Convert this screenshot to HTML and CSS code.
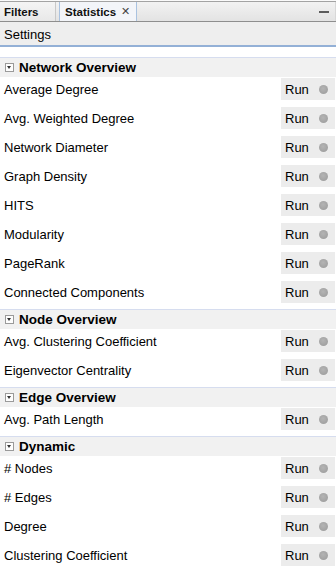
FILE: index.html
```html
<!DOCTYPE html>
<html>
<head>
<meta charset="utf-8">
<link rel="stylesheet" href="styles.css">
</head>
<body>
<div class="tabbar">
  <div class="tabs">
    <div class="tab tab-filters">Filters</div>
    <div class="tab tab-active">Statistics <span class="close">✕</span></div>
    <div class="tabfill"><span class="minimize"></span></div>
  </div>
</div>
<div class="settings">Settings</div>
<div class="spacer"></div>

<div class="sec"><span class="toggle"></span>Network Overview</div>
<div class="row"><span class="label">Average Degree</span><span class="run">Run<span class="dot"></span></span></div>
<div class="row"><span class="label">Avg. Weighted Degree</span><span class="run">Run<span class="dot"></span></span></div>
<div class="row"><span class="label">Network Diameter</span><span class="run">Run<span class="dot"></span></span></div>
<div class="row"><span class="label">Graph Density</span><span class="run">Run<span class="dot"></span></span></div>
<div class="row"><span class="label">HITS</span><span class="run">Run<span class="dot"></span></span></div>
<div class="row"><span class="label">Modularity</span><span class="run">Run<span class="dot"></span></span></div>
<div class="row"><span class="label">PageRank</span><span class="run">Run<span class="dot"></span></span></div>
<div class="row"><span class="label">Connected Components</span><span class="run">Run<span class="dot"></span></span></div>

<div class="sec"><span class="toggle"></span>Node Overview</div>
<div class="row"><span class="label">Avg. Clustering Coefficient</span><span class="run">Run<span class="dot"></span></span></div>
<div class="row"><span class="label">Eigenvector Centrality</span><span class="run">Run<span class="dot"></span></span></div>

<div class="sec"><span class="toggle"></span>Edge Overview</div>
<div class="row"><span class="label">Avg. Path Length</span><span class="run">Run<span class="dot"></span></span></div>

<div class="sec"><span class="toggle"></span>Dynamic</div>
<div class="row"><span class="label"># Nodes</span><span class="run">Run<span class="dot"></span></span></div>
<div class="row"><span class="label"># Edges</span><span class="run">Run<span class="dot"></span></span></div>
<div class="row"><span class="label">Degree</span><span class="run">Run<span class="dot"></span></span></div>
<div class="row"><span class="label">Clustering Coefficient</span><span class="run">Run<span class="dot"></span></span></div>
</body>
</html>
```
FILE: styles.css
```css
html, body {
  margin: 0;
  padding: 0;
  background: #ffffff;
}
body {
  width: 336px;
  height: 571px;
  overflow: hidden;
  font-family: "Liberation Sans", Arial, sans-serif;
  font-size: 13px;
  color: #000;
}
.tabbar {
  padding-top: 1px;
  background: #fafafa;
}
.tabs {
  display: flex;
  height: 21px;
  box-sizing: border-box;
  border-top: 1px solid #a3a3a3;
  border-bottom: 1px solid #8e8e8e;
  background: linear-gradient(#f2f2f2, #e3e3e3);
}
.tab {
  display: flex;
  align-items: center;
  box-sizing: border-box;
  font-weight: bold;
  font-size: 11.5px;
  color: #111;
}
.tab-filters {
  width: 56px;
  padding-left: 4px;
  background: linear-gradient(#f4f4f4, #e8e8e8);
  border-right: 1px solid #c8c8c8;
}
.tab-active {
  margin-left: 3px;
  width: 78px;
  padding-left: 5px;
  background: #f3f5f9;
  border-left: 1px solid #a9c2e0;
  border-right: 1px solid #a9c2e0;
}
.close {
  font-weight: normal;
  font-size: 11px;
  color: #444;
  margin-left: 5px;
}
.tabfill {
  flex: 1;
  display: flex;
  align-items: center;
  justify-content: flex-end;
  padding-right: 6px;
  border-right: 1px solid #d8d8d8;
}
.minimize {
  width: 10px;
  height: 2px;
  background: #5c5c5c;
  margin-top: 1px;
}
.settings {
  height: 23px;
  line-height: 25px;
  padding-left: 4px;
  background: #eeeeee;
  border-bottom: 2px solid #93b0d6;
  font-size: 13px;
}
.spacer {
  height: 10px;
}
.sec {
  height: 20px;
  box-sizing: border-box;
  border-top: 1px solid #d6ddef;
  background: #f1f1f1;
  display: flex;
  align-items: center;
  padding-left: 5px;
  font-weight: bold;
  font-size: 13.5px;
  color: #000;
}
.toggle {
  position: relative;
  width: 9px;
  height: 9px;
  box-sizing: border-box;
  border: 1px solid #9a9a9a;
  background: #fdfdfd;
  margin-right: 5px;
}
.toggle::after {
  content: "";
  position: absolute;
  left: 1px;
  top: 2px;
  border-left: 2.5px solid transparent;
  border-right: 2.5px solid transparent;
  border-top: 3px solid #333;
}
.row {
  display: flex;
  align-items: flex-start;
  height: 29px;
  padding-left: 4px;
}
.label {
  margin-top: 1px;
  padding-top: 1px;
  line-height: 22px;
}
.run {
  margin-left: auto;
  margin-top: 1px;
  margin-right: 1px;
  width: 54px;
  height: 22px;
  box-sizing: border-box;
  padding-left: 4px;
  padding-top: 1px;
  background: #ececec;
  display: flex;
  align-items: center;
  line-height: 20px;
}
.dot {
  width: 9px;
  height: 9px;
  border-radius: 50%;
  background: radial-gradient(circle at 45% 40%, #b4b4b4, #9a9a9a);
  margin-left: auto;
  margin-right: 7px;
}
```
